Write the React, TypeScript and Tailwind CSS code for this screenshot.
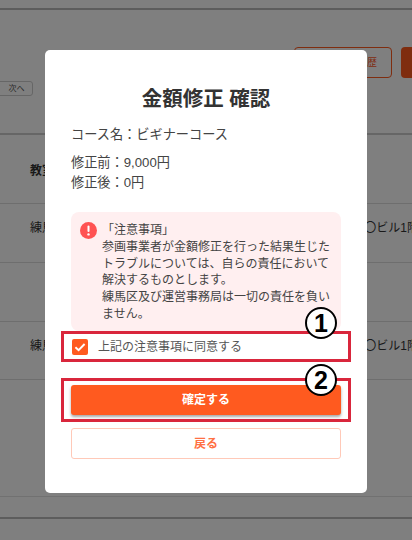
export default function App() {
  const font = { fontFamily: '"Liberation Sans", "Noto Sans CJK JP", "Noto Sans", sans-serif' };
  return (
    <div style={font} className="relative h-[540px] w-[412px] overflow-hidden bg-white text-[#333333]">
      {/* Underlying page */}
      <div className="h-[10px] border-b-2 border-[#bbbbbb]" />
      <div className="flex h-[125px] items-start justify-between border-b-2 border-[#cccccc]">
        <div className="mt-[71px] ml-[-20px] flex h-[15px] w-[53px] items-center justify-center rounded-[3px] border border-[#cccccc] pl-[20px] text-[8px] text-[#555555]">
          次へ
        </div>
        <div className="mt-[37px] flex gap-[9px]">
          <div className="flex h-[31px] w-[98px] items-center justify-end rounded-[4px] border border-[#ff5a1f] pr-[14px] text-[10px] text-[#ff5a1f]">
            修正履歴
          </div>
          <div className="h-[31px] w-[30px] -mr-[19px] rounded-[4px] bg-[#ff5a1f]" />
        </div>
      </div>
      <div className="flex h-[68px] items-center pl-[30px] pt-[3px] text-[12px] font-bold">教室名</div>
      <div className="flex h-[59px] items-start justify-between border-t border-[#dddddd] pl-[30px] pt-[15px] text-[12px]">
        <span>練馬区</span>
        <span className="-mr-[7px] whitespace-nowrap">〇〇ビル1階</span>
      </div>
      <div className="h-[59px] border-t border-[#dddddd]" />
      <div className="flex h-[58px] items-start justify-between border-t border-[#dddddd] pl-[30px] pt-[15px] text-[12px]">
        <span>練馬区</span>
        <span className="-mr-[7px] whitespace-nowrap">〇〇ビル1階</span>
      </div>
      <div className="h-[117px] border-t border-[#dddddd]" />
      <div className="h-[21px] border-t border-[#e2e2e2]" />
      <div className="border-t-2 border-[#bbbbbb]" />

      {/* Dim layer */}
      <div className="absolute inset-0 bg-black/50" />

      {/* Modal */}
      <div className="absolute left-[45px] top-[50px] flex h-[443px] w-[322px] flex-col rounded-[5px] bg-white px-[26px]">
        <h2 className="mt-[34px] text-center text-[20.5px] leading-[30px] font-bold text-[#333333]">金額修正 確認</h2>
        <p className="mt-[11px] text-[13.2px] leading-[20px] text-[#444444]">コース名：ビギナーコース</p>
        <p className="mt-[8px] text-[13.2px] leading-[20px] text-[#444444]">修正前：9,000円</p>
        <p className="text-[13.2px] leading-[20px] text-[#444444]">修正後：0円</p>

        <div className="mt-[19px] flex h-[119px] gap-[5px] rounded-[8px] bg-[#ffeff0] pl-[9px] pr-[8px] pt-[10px]">
          <svg viewBox="0 0 17 17" className="h-[17px] w-[17px] shrink-0">
            <circle cx="8.5" cy="8.5" r="8.5" fill="#ff5252" />
            <rect x="7.5" y="3.6" width="2" height="6.4" rx="1" fill="#ffffff" />
            <circle cx="8.5" cy="12.4" r="1.2" fill="#ffffff" />
          </svg>
          <p className="text-[12px] leading-[16.8px] text-[#444444]">
            「注意事項」
            <br />
            参画事業者が金額修正を行った結果生じたトラブルについては、自らの責任において解決するものとします。
            <br />
            練馬区及び運営事務局は一切の責任を負いません。
          </p>
        </div>

        <div className="relative -mx-[10px] flex h-[31px] items-center border-[3px] border-[#d9263c] pl-[8px]">
          <span className="flex h-[16px] w-[16px] items-center justify-center rounded-[2px] bg-[#ff5a1f]">
            <svg viewBox="0 0 16 16" className="h-[16px] w-[16px]">
              <path d="M3.4 8.2 L6.6 11.2 L12.6 5" fill="none" stroke="#ffffff" strokeWidth="1.9" />
            </svg>
          </span>
          <span className="ml-[10px] text-[12px] leading-[18px] text-[#555555]">上記の注意事項に同意する</span>
          <span className="absolute right-[11px] top-[-27px] flex h-[32px] w-[32px] items-center justify-center rounded-full border-2 border-black bg-white text-[25px] font-bold leading-none text-black">
            1
          </span>
        </div>

        <div className="relative -mx-[10px] mt-[16px] flex h-[44px] items-center border-[3px] border-[#d9263c] px-[7px]">
          <button className="h-[30px] w-full rounded-[3px] bg-[#ff5a1f] text-[12px] font-bold text-white shadow-[0_2px_3px_rgba(0,0,0,0.35)]">
            確定する
          </button>
          <span className="absolute right-[11px] top-[-17px] flex h-[32px] w-[32px] items-center justify-center rounded-full border-2 border-black bg-white text-[25px] font-bold leading-none text-black">
            2
          </span>
        </div>

        <button className="mt-[6px] h-[31px] w-full rounded-[3px] border border-[#ffc9b8] bg-white text-[12px] font-bold text-[#ff7043]">
          戻る
        </button>
      </div>
    </div>
  );
}
